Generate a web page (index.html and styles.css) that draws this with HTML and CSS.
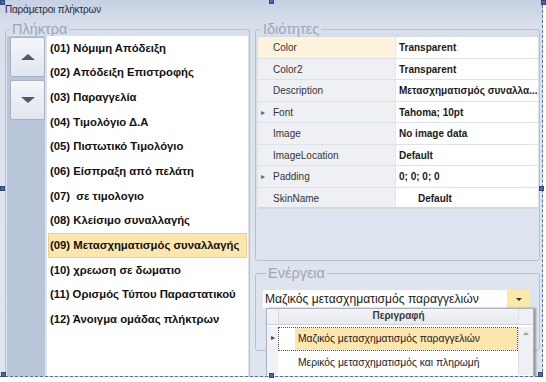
FILE: index.html
```html
<!DOCTYPE html>
<html lang="el">
<head>
	<meta charset="UTF-8">
	<title>Παράμετροι πλήκτρων</title>
	<link rel="stylesheet" href="styles.css">
</head>
<body>
	<div class="designer">
		<div class="form">
			<div class="form_title">Παράμετροι πλήκτρων</div>
			<div class="form_body">
				<!-- πλήκτρα -->
				<fieldset class="group group_keys">
					<legend>Πλήκτρα</legend>
					<div class="keys">
						<div class="nav">
							<div class="nav_btn"><span class="tri_up"></span></div>
							<div class="nav_btn"><span class="tri_down"></span></div>
						</div>
						<ul class="key_list">
							<li>(01) Νόμιμη Απόδειξη</li>
							<li>(02) Απόδειξη Επιστροφής</li>
							<li>(03) Παραγγελία</li>
							<li>(04) Τιμολόγιο Δ.Α</li>
							<li>(05) Πιστωτικό Τιμολόγιο</li>
							<li>(06) Είσπραξη από πελάτη</li>
							<li>(07)&nbsp; σε τιμολογιο</li>
							<li>(08) Κλείσιμο συναλλαγής</li>
							<li class="selected">(09) Μετασχηματισμός συναλλαγής</li>
							<li>(10) χρεωση σε δωματιο</li>
							<li>(11) Ορισμός Τύπου Παραστατικού</li>
							<li>(12) Άνοιγμα ομάδας πλήκτρων</li>
						</ul>
					</div>
				</fieldset>

				<div class="side">
					<!-- ιδιότητες -->
					<fieldset class="group group_props">
						<legend>Ιδιότητες</legend>
						<div class="grid">
							<div class="row active"><div class="name">Color</div><div class="val">Transparent</div></div>
							<div class="row"><div class="name">Color2</div><div class="val">Transparent</div></div>
							<div class="row"><div class="name">Description</div><div class="val">Μετασχηματισμός συναλλα...</div></div>
							<div class="row"><div class="name"><span class="exp">&#9656;</span>Font</div><div class="val">Tahoma; 10pt</div></div>
							<div class="row"><div class="name">Image</div><div class="val">No image data</div></div>
							<div class="row"><div class="name">ImageLocation</div><div class="val">Default</div></div>
							<div class="row"><div class="name"><span class="exp">&#9656;</span>Padding</div><div class="val">0; 0; 0; 0</div></div>
							<div class="row"><div class="name">SkinName</div><div class="val indent">Default</div></div>
						</div>
					</fieldset>

					<!-- ενέργεια -->
					<fieldset class="group group_action">
						<legend>Ενέργεια</legend>
						<div class="combo">
							<div class="combo_text">Μαζικός μετασχηματισμός παραγγελιών</div>
							<div class="combo_btn"><span class="tri_small"></span></div>
							<div class="popup">
								<div class="p_head">
									<div class="p_ind"></div>
									<div class="p_col">Περιγραφή</div>
									<div class="p_scroll"></div>
								</div>
								<div class="p_row focus">
									<div class="p_ind">&#9656;</div>
									<div class="p_cell"><span>Μαζικός μετασχηματισμός παραγγελιών</span></div>
									<div class="p_scroll"><span class="sc_up"></span></div>
								</div>
								<div class="p_row">
									<div class="p_ind"></div>
									<div class="p_cell"><span>Μερικός μετασχηματισμός και πληρωμή</span></div>
									<div class="p_scroll"></div>
								</div>
							</div>
						</div>
					</fieldset>
				</div>
			</div>
		</div>
		<!-- λαβές επιλογής -->
		<span class="handle h_tl"></span>
		<span class="handle h_tm"></span>
		<span class="handle h_tr"></span>
		<span class="handle h_ml"></span>
		<span class="handle h_mr"></span>
		<span class="handle h_bl"></span>
		<span class="handle h_bm"></span>
		<span class="handle h_br"></span>
	</div>
</body>
</html>
```

FILE: styles.css
```css
body{
	margin:0;
	background:#fff;
	font-family:"Liberation Sans",Arial,sans-serif;
}
.designer{
	position:relative;
	width:546px;
	height:382px;
}
.form{
	width:543px;
	height:377px;
	overflow:hidden;
	border-right:1px dashed #4f72ad;
	border-bottom:1px dashed #4f72ad;
	box-sizing:border-box;
	background:linear-gradient(#c6d0e2 0,#d7dfeb 24px,#dde3ee 120px,#dfe5ef);
}
.form_title{
	height:22px;
	line-height:20px;
	padding-left:5px;
	font-size:10px;
	color:#1e2a3c;
	letter-spacing:-0.2px;
}
.form_body{
	display:flex;
	gap:5px;
	padding:0 0 0 5px;
}

/* group boxes */
.group{
	margin:0;
	border:1px solid #b7c1d1;
	border-radius:3px;
	box-sizing:border-box;
	min-width:0;
}
.group legend{
	font-size:14.5px;
	line-height:14px;
	color:#9ca6b6;
	padding:0 2px;
	margin-left:3px;
}
.group_keys{
	width:245px;
	height:370px;
	padding:0 1px 0 1px;
}
.keys{
	display:flex;
	gap:2px;
	height:100%;
}
.nav{
	width:38px;
	background:#b9c6da;
	padding:1px 0 0 3px;
	box-sizing:border-box;
	display:flex;
	flex-direction:column;
	gap:3px;
}
.nav_btn{
	height:38px;
	border:1px solid #a7b3c5;
	border-radius:2px;
	background:linear-gradient(#f4f6f9,#e1e6ee);
	display:flex;
	align-items:center;
	justify-content:center;
}
.tri_up{
	border:7px solid transparent;
	border-top:0;
	border-bottom:6px solid #555a62;
}
.tri_down{
	border:7px solid transparent;
	border-bottom:0;
	border-top:6px solid #555a62;
}
.key_list{
	flex:1;
	margin:0;
	padding:0 1px 0 1px;
	list-style:none;
	background:#fff;
}
.key_list li{
	height:24.7px;
	line-height:24.7px;
	padding-left:2px;
	font-size:11.3px;
	font-weight:bold;
	color:#111;
	white-space:nowrap;
	box-sizing:border-box;
}
.key_list li:first-child{
	margin-top:-0.5px;
}
.key_list li.selected{
	background:#fde6ae;
	border:1px solid #f1cf86;
	line-height:22.7px;
	padding-left:1px;
}

.side{
	width:285px;
	display:flex;
	flex-direction:column;
	gap:5px;
}

/* property grid */
.group_props{
	height:239px;
	padding:0 1px 1px 2px;
}
.grid{
	height:100%;
	background:#fff;
	border-top:1px solid #d6dbe3;
	box-sizing:border-box;
}
.row{
	display:flex;
	height:21.5px;
	line-height:21px;
	font-size:10px;
	border-bottom:1px solid #dde1e8;
	box-sizing:border-box;
}
.row:last-child{
	border-bottom:2px solid #d3d8e0;
}
.name{
	width:138px;
	background:#eef0f4;
	color:#333;
	padding-left:15px;
	position:relative;
	border-right:1px solid #e2e5ea;
	box-sizing:border-box;
}
.row.active .name{
	background:#fdf3dd;
}
.exp{
	position:absolute;
	left:3px;
	font-size:8px;
	color:#666;
}
.val{
	flex:1;
	padding-left:3px;
	font-weight:bold;
	color:#1a1a1a;
	white-space:nowrap;
	overflow:hidden;
}
.val.indent{
	padding-left:22px;
}

/* combo */
.group_action{
	height:85px;
	padding:10px 9px 0 7px;
}
.combo{
	position:relative;
	display:flex;
	height:18px;
	background:#fff;
}
.combo_text{
	flex:1;
	font-size:12.1px;
	line-height:18px;
	padding-left:2px;
	color:#1a1a1a;
	white-space:nowrap;
}
.combo_btn{
	width:23px;
	background:#fde8a6;
	display:flex;
	align-items:center;
	justify-content:center;
}
.tri_small{
	border:3px solid transparent;
	border-bottom:0;
	border-top:3px solid #333;
}
.popup{
	position:absolute;
	left:3px;
	top:18px;
	width:266px;
	height:80px;
	background:#fff;
	border:1px solid #a9b1bd;
	box-shadow:2px 0 2px rgba(0,0,0,0.35);
	font-size:10.3px;
}
.p_head{
	display:flex;
	height:15px;
	line-height:14px;
	background:linear-gradient(#f3f4f6,#e6e9ee);
	border-bottom:1px solid #cfd4db;
	color:#333;
}
.p_head .p_ind{
	border-right:1px solid #d3d7de;
}
.p_col{
	flex:1;
	text-align:center;
	font-weight:bold;
	font-size:10px;
	color:#3a3a3a;
}
.p_ind{
	width:11px;
	background:#f0f1f4;
	font-size:8px;
	color:#444;
	text-align:center;
}
.p_scroll{
	width:14px;
	background:#eef0f3;
	border-left:1px solid #dde0e5;
	position:relative;
}
.p_row{
	display:flex;
	height:24px;
	line-height:24px;
	color:#222;
}
.p_row.focus{
	margin-top:2px;
}
.p_row .p_ind{
	line-height:22px;
}
.p_cell{
	flex:1;
	padding-left:17px;
	white-space:nowrap;
	overflow:hidden;
}
.p_cell span{
	display:block;
	padding-left:3px;
}
.p_row.focus .p_cell{
	border:1px dotted #555;
	line-height:22px;
	padding-left:16px;
}
.p_row.focus .p_cell span{
	background:#fde6ae;
}
.sc_up{
	position:absolute;
	left:4px;
	top:5px;
	border:3px solid transparent;
	border-top:0;
	border-bottom:3px solid #9aa2ad;
}

/* selection handles */
.handle{
	position:absolute;
	width:5px;
	height:5px;
	background:#4a6aa5;
	border:1px solid #30497a;
	box-sizing:border-box;
}
.h_tl{left:0;top:0;}
.h_tm{left:269px;top:-1px;}
.h_tr{left:541px;top:0;}
.h_ml{left:0;top:186px;}
.h_mr{left:539px;top:186px;}
.h_bl{left:1px;top:372px;}
.h_bm{left:269px;top:373px;}
.h_br{left:538px;top:372px;}
```
